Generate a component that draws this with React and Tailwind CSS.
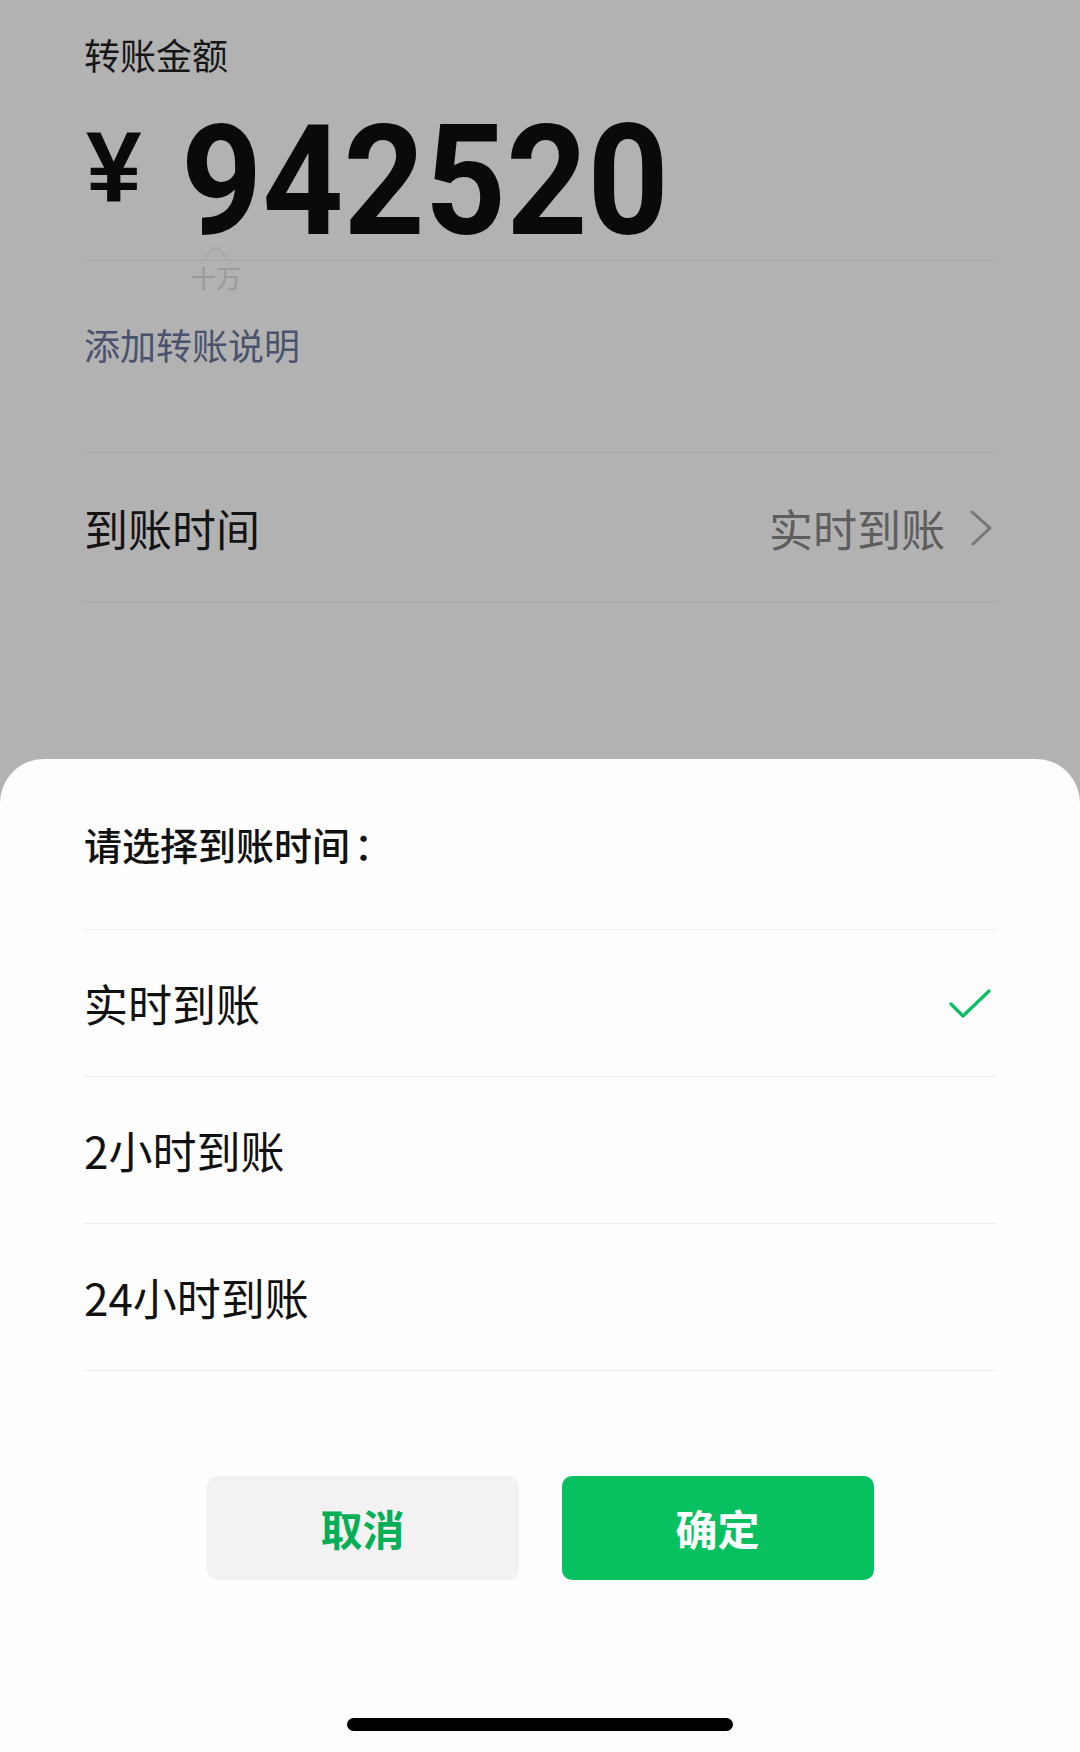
const options = ["实时到账", "2小时到账", "24小时到账"];

export default function App() {
  return (
    <div className="flex h-[1752px] w-[1080px] flex-col overflow-hidden bg-[#b2b2b2] font-['Noto_Sans_CJK_SC',sans-serif]">
      {/* page behind the sheet, dimmed */}
      <div className="px-[84px]">
        <div className="mt-[36px] text-[36px] leading-none text-[#161616]">转账金额</div>

        <div className="mt-[33px] flex items-start text-[#0a0a0a]">
          <span className="ml-[2px] mt-[12px] font-['Liberation_Sans',Arial,sans-serif] text-[100px] font-bold leading-none">¥</span>
          <span className="ml-[39px] origin-left scale-x-[0.92] font-['Roboto',sans-serif] text-[154px] font-bold leading-none">
            942520
          </span>
        </div>

        <div className="relative mt-[1px] h-px bg-[#a6a6a6]">
          <svg className="absolute left-[114px] top-[-14px]" width="36" height="16" viewBox="0 0 36 16" fill="none">
            <path d="M0 14.5 H5 L16.5 2 Q18 0.6 19.5 2 L31 14.5 H36" stroke="#a3a3a3" strokeWidth="1.2" />
          </svg>
        </div>
        <div className="mt-[4px] pl-[107px] text-[25px] leading-none text-[#999999]">十万</div>

        <div className="mt-[36px] text-[36px] leading-none text-[#4a526d]">添加转账说明</div>

        <div className="mt-[90px] h-px bg-[#a6a6a6]" />
        <div className="flex h-[149px] items-center justify-between">
          <span className="text-[44px] leading-none text-[#141414]">到账时间</span>
          <div className="flex items-center">
            <span className="text-[44px] leading-none text-[#5e5e5e]">实时到账</span>
            <svg className="ml-[23px] mr-[2px]" width="26" height="40" viewBox="0 0 26 40" fill="none">
              <path d="M4 4 L22 20 L5 36" stroke="#767676" strokeWidth="3" strokeLinecap="round" strokeLinejoin="round" />
            </svg>
          </div>
        </div>
        <div className="h-px bg-[#a6a6a6]" />
      </div>

      {/* bottom sheet */}
      <div className="mt-auto rounded-t-[44px] bg-[#fdfdfd]">
        <div className="mx-[84px]">
          <div className="flex h-[171px] items-center border-b border-[#ededed] text-[38px] font-medium leading-none text-[#111111]">
            请选择到账时间<span className="ml-[4px]">：</span>
          </div>
          {options.map((label, i) => (
            <div key={label} className="flex h-[147px] items-center justify-between border-b border-[#ededed]">
              <span className="text-[44px] leading-none text-[#111111]">{label}</span>
              {i === 0 && (
                <svg className="mr-[4px]" width="44" height="36" viewBox="0 0 44 36" fill="none">
                  <path d="M3 19 L15 31 L41 6" stroke="#07c160" strokeWidth="3.2" strokeLinecap="round" strokeLinejoin="round" />
                </svg>
              )}
            </div>
          ))}
        </div>

        <div className="mt-[105px] flex justify-center gap-[43px]">
          <button className="flex h-[104px] w-[312px] items-center justify-center rounded-[10px] bg-[#f2f2f2] text-[42px] font-bold leading-none text-[#06ae56]">
            取消
          </button>
          <button className="flex h-[104px] w-[312px] items-center justify-center rounded-[10px] bg-[#07c160] text-[42px] font-bold leading-none text-white">
            确定
          </button>
        </div>

        <div className="mt-[138px] flex justify-center pb-[21px]">
          <div className="h-[13px] w-[386px] rounded-full bg-black" />
        </div>
      </div>
    </div>
  );
}
